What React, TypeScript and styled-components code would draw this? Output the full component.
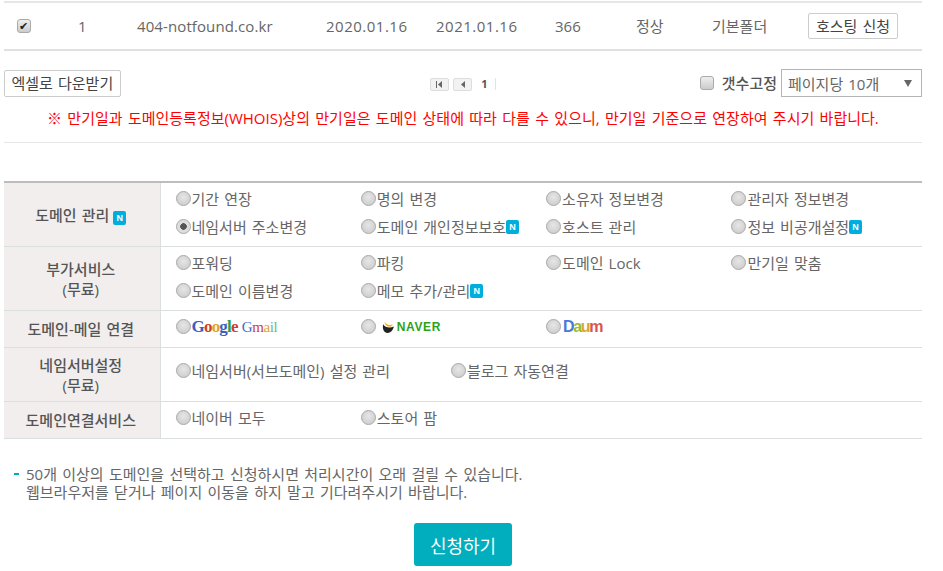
import React from 'react'
import styled, {createGlobalStyle} from 'styled-components'

const GlobalStyle = createGlobalStyle`
  html, body {
    margin: 0;
    padding: 0;
    background: #fff;
  }

  body {
    font-family: "Open Sans", "Noto Sans CJK KR", sans-serif;
    font-size: 15px;
    word-spacing: 1.2px;
    color: #666;
  }
`

const Page = styled.div`
  width: 918px;
  margin-left: 4px;
  height: 571px;
  overflow: hidden;
`

const DataRow = styled.div`
  display: grid;
  grid-template-columns: 61px 59px 189px 110px 119px 81px 76px 96px auto;
  align-items: center;
  height: 46px;
  padding-left: 13px;
  border-top: 2px solid #e6e6e6;
  border-bottom: 2px solid #e0e0e0;
  margin-top: 1px;
  line-height: 20px;
`

const DomainText = styled.span`
  letter-spacing: 0.1px;
`

const DateText = styled.span`
  letter-spacing: 0.5px;
`

const SmallButton = styled.button`
  justify-self: start;
  height: 26px;
  padding: 0 7px;
  border: 1px solid #ccc;
  border-radius: 2px;
  background: #fff;
  color: #444;
  font: inherit;
  word-spacing: inherit;
  line-height: 24px;
  white-space: nowrap;
`

const ExcelButton = styled(SmallButton)`
  height: 27px;
  padding: 0 6.5px;
`

const CheckBox = styled.input.attrs({type: 'checkbox'})`
  appearance: none;
  width: 14px;
  height: 14px;
  margin: 0;
  border: 1px solid #aaa;
  border-radius: 3px;
  background: linear-gradient(#eee, #ccc);
  position: relative;

  &:checked::after {
    content: "✔";
    position: absolute;
    left: 1px;
    top: -3px;
    font-size: 11px;
    line-height: 18px;
    color: #222;
  }
`

const Toolbar = styled.div`
  display: grid;
  grid-template-columns: 1fr auto 1fr;
  align-items: center;
  height: 28px;
  margin-top: 18px;
`

const Pager = styled.div`
  display: flex;
  align-items: center;
  gap: 4px;
  margin-top: 2px;
  font-size: 11px;
  font-weight: 700;
  color: #555;
`

const PagerButton = styled.span`
  display: flex;
  align-items: center;
  justify-content: center;
  width: 17px;
  height: 11px;
  border: 1px solid #ddd;
  border-radius: 2px;
  background: #f2f2f2;
`

const PageNumber = styled.span`
  padding: 0 7px 0 5px;
  border-right: 1px solid #e2e2e2;
  line-height: 12px;
`

const ToolbarRight = styled.div`
  display: flex;
  justify-content: flex-end;
  align-items: center;
`

const FixLabel = styled.label`
  display: flex;
  align-items: center;
  gap: 8px;
  margin-right: 4px;
  font-weight: 500;
  color: #555;
  line-height: 20px;
`

const PageSize = styled.div`
  display: flex;
  align-items: center;
  justify-content: space-between;
  box-sizing: border-box;
  width: 141px;
  height: 28px;
  padding: 0 6px;
  border: 1px solid #b5b5b5;
`

const Arrow = styled.span`
  width: 0;
  height: 0;
  margin-right: 3px;
  border-left: 4px solid transparent;
  border-right: 4px solid transparent;
  border-top: 7px solid #666;
`

const Warning = styled.p`
  height: 34px;
  margin: 11px 0 38px;
  padding-left: 43px;
  border-bottom: 1px solid #e6e6e6;
  color: #f00;
  line-height: 20px;
  word-spacing: 1.45px;
  white-space: nowrap;
`

const ServiceTable = styled.table`
  width: 100%;
  border-collapse: collapse;
  border-top: 2px solid #bdbdbd;
  table-layout: fixed;
`

const HeadCell = styled.th`
  width: 156px;
  padding: 0 2px 0 0;
  box-sizing: border-box;
  background: #f1eeed;
  border-right: 1px solid #dcdfdf;
  border-bottom: 1px solid #dcdfdf;
  color: #555;
  font-size: 15px;
  font-weight: 500;
  line-height: 20px;
  text-align: center;
`

const BodyCell = styled.td<{$height: number}>`
  height: ${p => p.$height}px;
  padding: 0 0 0 15px;
  border-bottom: 1px solid #dcdfdf;
  vertical-align: top;
`

const Options = styled.div<{$wide?: boolean}>`
  display: grid;
  grid-template-columns: ${p => (p.$wide ? '275.5px auto' : 'repeat(4, 185.3px)')};
  grid-auto-rows: 28px;
  padding-top: 5px;
`

const Option = styled.label<{$nudge?: number}>`
  display: flex;
  align-items: center;
  height: 22px;
  margin-top: ${p => p.$nudge ?? 0}px;
  white-space: nowrap;
  line-height: 20px;
`

const Radio = styled.input.attrs({type: 'radio'})`
  appearance: none;
  flex: none;
  box-sizing: border-box;
  width: 15px;
  height: 15px;
  margin: 0 1px 2px 0;
  border: 1px solid #aaa;
  border-radius: 50%;
  background: radial-gradient(circle at 50% 40%, #e6e6e6, #c8c8c8);

  &:checked {
    background: radial-gradient(circle, #555 0 3px, #ddd 3.5px);
  }
`

const NewBadge = styled.span`
  display: inline-flex;
  align-items: center;
  justify-content: center;
  width: 13px;
  height: 14px;
  border-radius: 2px;
  background: #00aede;
  color: #fff;
  font-family: "Liberation Sans", sans-serif;
  font-size: 9px;
  font-weight: 700;
  line-height: 14px;
`

const HeadBadge = styled(NewBadge)`
  margin-left: 4px;
`

const Logo = styled.span`
  display: inline-flex;
  align-items: baseline;
  font-family: "Liberation Serif", serif;
  font-size: 17px;
  font-weight: 700;
  letter-spacing: -0.8px;
  line-height: 18px;
`

const Letter = styled.span<{$color: string}>`
  color: ${p => p.$color};
`

const GmailLogo = styled(Logo)`
  margin-left: 4px;
  font-size: 15px;
  font-weight: 400;
  letter-spacing: -0.4px;
`

const NaverLogo = styled.span`
  margin-left: 2px;
  color: #2ba31a;
  font-family: "Liberation Sans", sans-serif;
  font-size: 12px;
  font-weight: 700;
  letter-spacing: 0.6px;
`

const NaverMark = styled.svg`
  margin-left: 4px;
`

const DaumLogo = styled.span`
  display: inline-flex;
  align-items: baseline;
  font-family: "Liberation Sans", sans-serif;
  font-size: 16px;
  font-weight: 700;
  letter-spacing: -1.4px;
  line-height: 16px;
  margin-left: 1px;
`

const Note = styled.div`
  display: flex;
  margin: 26px 0 0 10px;
  line-height: 18px;
  word-spacing: 1.4px;
`

const Dash = styled.span`
  flex: none;
  width: 5px;
  height: 2px;
  margin: 8px 7px 0 0;
  background: #00aebd;
`

const SubmitRow = styled.div`
  display: flex;
  justify-content: center;
  margin-top: 22px;
`

const SubmitButton = styled.button`
  width: 98px;
  height: 43px;
  border: 0;
  border-radius: 3px;
  background: #00aebd;
  color: #fff;
  font: inherit;
  font-size: 18px;
`

type Item = {label: string; isNew?: boolean; checked?: boolean}

const renderOptions = (items: Item[], group: string, wide?: boolean) => (
    <Options $wide={wide}>
        {items.map(item => (
            <Option key={item.label}>
                <Radio name={group} defaultChecked={item.checked}/>
                {item.label}
                {item.isNew && <NewBadge>N</NewBadge>}
            </Option>
        ))}
    </Options>
)

const colored = (word: string, colors: string[]) =>
    word.split('').map((ch, i) => <Letter key={i} $color={colors[i]}>{ch}</Letter>)

const App = () => {
    return (
        <Page>
            <GlobalStyle/>
            <DataRow>
                <CheckBox defaultChecked/>
                <span>1</span>
                <DomainText>404-notfound.co.kr</DomainText>
                <DateText>2020.01.16</DateText>
                <DateText>2021.01.16</DateText>
                <span>366</span>
                <span>정상</span>
                <span>기본폴더</span>
                <SmallButton>호스팅 신청</SmallButton>
            </DataRow>

            <Toolbar>
                <div><ExcelButton>엑셀로 다운받기</ExcelButton></div>
                <Pager>
                    <PagerButton>
                        <svg width="9" height="7" viewBox="0 0 9 7"><path d="M1 0h1v7H1zM7 0v7L3 3.5z" fill="#666"/></svg>
                    </PagerButton>
                    <PagerButton>
                        <svg width="6" height="7" viewBox="0 0 6 7"><path d="M5 0v7L1 3.5z" fill="#666"/></svg>
                    </PagerButton>
                    <PageNumber>1</PageNumber>
                </Pager>
                <ToolbarRight>
                    <FixLabel><CheckBox/>갯수고정</FixLabel>
                    <PageSize>페이지당 10개<Arrow/></PageSize>
                </ToolbarRight>
            </Toolbar>

            <Warning>※ 만기일과 도메인등록정보(WHOIS)상의 만기일은 도메인 상태에 따라 다를 수 있으니, 만기일 기준으로 연장하여 주시기 바랍니다.</Warning>

            <ServiceTable>
                <tbody>
                <tr>
                    <HeadCell>도메인 관리<HeadBadge>N</HeadBadge></HeadCell>
                    <BodyCell $height={63}>
                        {renderOptions([
                            {label: '기간 연장'},
                            {label: '명의 변경'},
                            {label: '소유자 정보변경'},
                            {label: '관리자 정보변경'},
                            {label: '네임서버 주소변경', checked: true},
                            {label: '도메인 개인정보보호', isNew: true},
                            {label: '호스트 관리'},
                            {label: '정보 비공개설정', isNew: true},
                        ], 'domain')}
                    </BodyCell>
                </tr>
                <tr>
                    <HeadCell>부가서비스<br/>(무료)</HeadCell>
                    <BodyCell $height={63}>
                        {renderOptions([
                            {label: '포워딩'},
                            {label: '파킹'},
                            {label: '도메인 Lock'},
                            {label: '만기일 맞춤'},
                            {label: '도메인 이름변경'},
                            {label: '메모 추가/관리', isNew: true},
                        ], 'extra')}
                    </BodyCell>
                </tr>
                <tr>
                    <HeadCell>도메인-메일 연결</HeadCell>
                    <BodyCell $height={36}>
                        <Options>
                            <Option>
                                <Radio name="mail"/>
                                <Logo>{colored('Google', ['#3b5fc0', '#d0402b', '#e0a52a', '#3b5fc0', '#2e9e44', '#d0402b'])}</Logo>
                                <GmailLogo>{colored('Gmail', ['#3b6fc9', '#d0402b', '#e0a52a', '#6aaed6', '#6cbf6c'])}</GmailLogo>
                            </Option>
                            <Option>
                                <Radio name="mail"/>
                                <NaverMark width="14" height="13" viewBox="0 0 13 12">
                                    <path d="M2 3c2 3 6 4 10 2-1 4-3 6-6 6S1 8 2 3z" fill="#222"/>
                                    <path d="M3 1c3 3 5 3 8 2-1 3-6 4-8-2z" fill="#f2b01e"/>
                                </NaverMark>
                                <NaverLogo>NAVER</NaverLogo>
                            </Option>
                            <Option>
                                <Radio name="mail"/>
                                <DaumLogo>{colored('Daum', ['#4a78dc', '#9dbb2c', '#e0a52a', '#d9534f'])}</DaumLogo>
                            </Option>
                        </Options>
                    </BodyCell>
                </tr>
                <tr>
                    <HeadCell>네임서버설정<br/>(무료)</HeadCell>
                    <BodyCell $height={53}>
                        <Options $wide>
                            <Option $nudge={7}><Radio name="ns"/>네임서버(서브도메인) 설정 관리</Option>
                            <Option $nudge={7}><Radio name="ns"/>블로그 자동연결</Option>
                        </Options>
                    </BodyCell>
                </tr>
                <tr>
                    <HeadCell>도메인연결서비스</HeadCell>
                    <BodyCell $height={36}>
                        {renderOptions([{label: '네이버 모두'}, {label: '스토어 팜'}], 'connect')}
                    </BodyCell>
                </tr>
                </tbody>
            </ServiceTable>

            <Note>
                <Dash/>
                <div>
                    50개 이상의 도메인을 선택하고 신청하시면 처리시간이 오래 걸릴 수 있습니다.<br/>
                    웹브라우저를 닫거나 페이지 이동을 하지 말고 기다려주시기 바랍니다.
                </div>
            </Note>

            <SubmitRow>
                <SubmitButton>신청하기</SubmitButton>
            </SubmitRow>
        </Page>
    )
}

export default App
